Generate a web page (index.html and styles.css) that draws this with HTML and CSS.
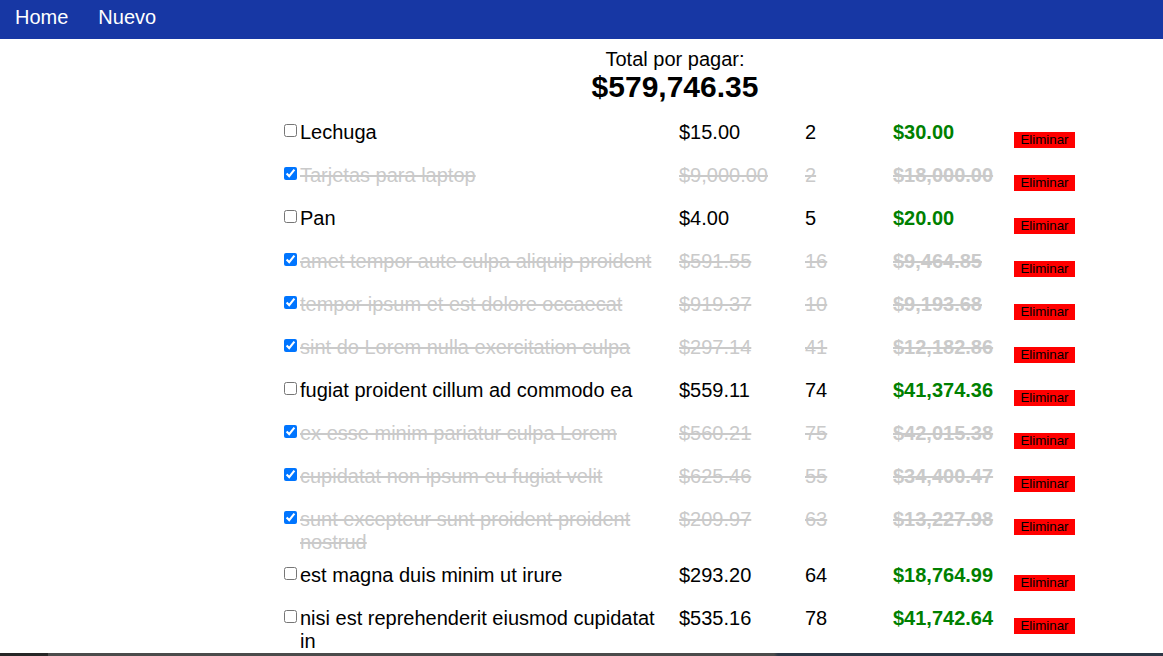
FILE: index.html
```html
<!DOCTYPE html>
<html lang="es">
<head>
<meta charset="utf-8">
<title>Lista de compras</title>
<link rel="stylesheet" href="styles.css">
</head>
<body>
<nav class="navbar">
  <a class="nav-link" href="#">Home</a>
  <a class="nav-link" href="#">Nuevo</a>
</nav>
<main class="container">
  <header class="summary">
    <div class="summary-label">Total por pagar:</div>
    <div class="summary-total">$579,746.35</div>
  </header>
  <div class="list">
    <div class="row">
      <label class="name"><input type="checkbox"><span>Lechuga</span></label>
      <span class="price">$15.00</span><span class="qty">2</span><span class="total">$30.00</span>
      <button class="delete">Eliminar</button>
    </div>
    <div class="row done">
      <label class="name"><input type="checkbox" checked><span>Tarjetas para laptop</span></label>
      <span class="price">$9,000.00</span><span class="qty">2</span><span class="total">$18,000.00</span>
      <button class="delete">Eliminar</button>
    </div>
    <div class="row">
      <label class="name"><input type="checkbox"><span>Pan</span></label>
      <span class="price">$4.00</span><span class="qty">5</span><span class="total">$20.00</span>
      <button class="delete">Eliminar</button>
    </div>
    <div class="row done">
      <label class="name"><input type="checkbox" checked><span>amet tempor aute culpa aliquip proident</span></label>
      <span class="price">$591.55</span><span class="qty">16</span><span class="total">$9,464.85</span>
      <button class="delete">Eliminar</button>
    </div>
    <div class="row done">
      <label class="name"><input type="checkbox" checked><span>tempor ipsum et est dolore occaecat</span></label>
      <span class="price">$919.37</span><span class="qty">10</span><span class="total">$9,193.68</span>
      <button class="delete">Eliminar</button>
    </div>
    <div class="row done">
      <label class="name"><input type="checkbox" checked><span>sint do Lorem nulla exercitation culpa</span></label>
      <span class="price">$297.14</span><span class="qty">41</span><span class="total">$12,182.86</span>
      <button class="delete">Eliminar</button>
    </div>
    <div class="row">
      <label class="name"><input type="checkbox"><span>fugiat proident cillum ad commodo ea</span></label>
      <span class="price">$559.11</span><span class="qty">74</span><span class="total">$41,374.36</span>
      <button class="delete">Eliminar</button>
    </div>
    <div class="row done">
      <label class="name"><input type="checkbox" checked><span>ex esse minim pariatur culpa Lorem</span></label>
      <span class="price">$560.21</span><span class="qty">75</span><span class="total">$42,015.38</span>
      <button class="delete">Eliminar</button>
    </div>
    <div class="row done">
      <label class="name"><input type="checkbox" checked><span>cupidatat non ipsum eu fugiat velit</span></label>
      <span class="price">$625.46</span><span class="qty">55</span><span class="total">$34,400.47</span>
      <button class="delete">Eliminar</button>
    </div>
    <div class="row done">
      <label class="name"><input type="checkbox" checked><span>sunt excepteur sunt proident proident nostrud</span></label>
      <span class="price">$209.97</span><span class="qty">63</span><span class="total">$13,227.98</span>
      <button class="delete">Eliminar</button>
    </div>
    <div class="row">
      <label class="name"><input type="checkbox"><span>est magna duis minim ut irure</span></label>
      <span class="price">$293.20</span><span class="qty">64</span><span class="total">$18,764.99</span>
      <button class="delete">Eliminar</button>
    </div>
    <div class="row">
      <label class="name"><input type="checkbox"><span>nisi est reprehenderit eiusmod cupidatat in</span></label>
      <span class="price">$535.16</span><span class="qty">78</span><span class="total">$41,742.64</span>
      <button class="delete">Eliminar</button>
    </div>
  </div>
</main>
<div class="bottom-strip"></div>
</body>
</html>
```
FILE: styles.css
```css
html {
  scrollbar-width: none;
}
html::-webkit-scrollbar {
  display: none;
}
body {
  margin: 0;
  font-family: "Liberation Sans", Arial, sans-serif;
  color: #000;
  background: #fff;
}
.navbar {
  height: 39px;
  background: #1737a4;
  display: flex;
  align-items: center;
  padding-left: 15px;
  gap: 30px;
}
.nav-link {
  color: #fff;
  text-decoration: none;
  font-size: 20px;
  line-height: 23px;
  margin-top: -4px;
}
.container {
  margin-left: 280px;
  width: 790px;
}
.summary {
  text-align: center;
  padding-top: 9px;
  margin-bottom: 13px;
}
.summary-label {
  font-size: 20px;
  line-height: 22px;
}
.summary-total {
  font-size: 30px;
  font-weight: bold;
  line-height: 34px;
}
.row {
  display: grid;
  grid-template-columns: 399px 126px 88px 121px 61px;
  align-items: start;
  min-height: 43px;
  box-sizing: border-box;
  padding: 4px 0 6px;
  font-size: 20px;
  line-height: 23px;
}
.name {
  display: flex;
  align-items: flex-start;
  padding-right: 12px;
}
.name input {
  width: 13px;
  height: 13px;
  margin: 3px 3px 3px 4px;
  flex: none;
}
.total {
  color: #008000;
  font-weight: bold;
}
.done .name span,
.done .price,
.done .qty,
.done .total {
  color: #cacaca;
  text-decoration: line-through;
}
.delete {
  margin-top: 11px;
  width: 61px;
  height: 16px;
  padding: 0 6px;
  border: 0;
  background: #ff0000;
  color: #000;
  font-family: "Liberation Sans", Arial, sans-serif;
  font-size: 13.333px;
  line-height: 16px;
  text-align: center;
}
.bottom-strip {
  position: fixed;
  left: 0;
  right: 0;
  bottom: 0;
  height: 3px;
  background: linear-gradient(to right, #262626 0, #262626 48px, #4b4b4b 48px, #4b4b4b 774px, #2d3746 778px, #2d3746 100%);
}
```
